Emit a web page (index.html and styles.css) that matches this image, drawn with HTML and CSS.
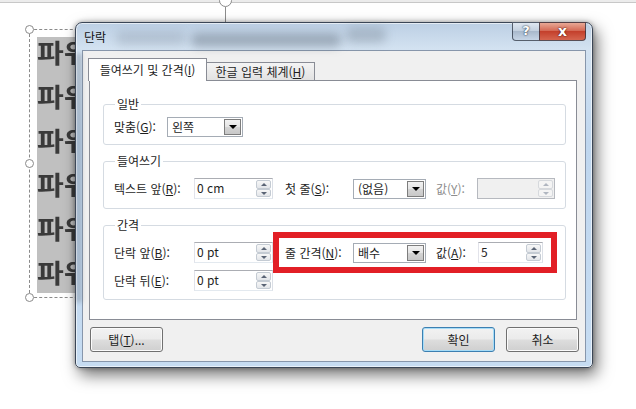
FILE: index.html
```html
<!DOCTYPE html>
<html lang="ko">
<head>
    <meta charset="UTF-8">
    <title>단락</title>
    <link rel="stylesheet" href="styles.css">
</head>
<body>
    <div class="workspace">
        <div class="slide-top"></div>
        <div class="rotate-handle"></div>
        <div class="rotate-stem"></div>

        <div class="textbox">
            <span class="handle h-tl"></span>
            <span class="handle h-ml"></span>
            <span class="handle h-bl"></span>
            <div class="textbox-fill">
                <p>파워</p>
                <p>파워</p>
                <p>파워</p>
                <p>파워</p>
                <p>파워</p>
                <p>파워</p>
            </div>
        </div>

        <div class="dialog">
            <div class="smudge s1"></div>
            <div class="smudge s2"></div>
            <div class="smudge s3"></div>
            <div class="smudge s4"></div>

            <div class="titlebar">
                <span class="title">단락</span>
                <div class="caption-buttons">
                    <span class="cap-help">?</span>
                    <span class="cap-close">x</span>
                </div>
            </div>

            <div class="client">
                <div class="tabs">
                    <span class="tab active">들여쓰기 및 간격(<u>I</u>)</span>
                    <span class="tab">한글 입력 체계(<u>H</u>)</span>
                </div>

                <div class="tab-panel">
                    <fieldset class="group">
                        <legend>일반</legend>
                        <div class="row">
                            <span class="lbl w-53">맞춤(<u>G</u>):</span>
                            <div class="combo w-76">
                                <span class="combo-value">왼쪽</span>
                                <span class="combo-btn"></span>
                            </div>
                        </div>
                    </fieldset>

                    <fieldset class="group">
                        <legend>들여쓰기</legend>
                        <div class="row">
                            <span class="lbl w-80">텍스트 앞(<u>R</u>):</span>
                            <div class="spin w-79">
                                <span class="spin-value">0 cm</span>
                                <span class="spin-btns"><i class="up"></i><i class="down"></i></span>
                            </div>
                            <span class="lbl w-68 ml-12">첫 줄(<u>S</u>):</span>
                            <div class="combo w-73">
                                <span class="combo-value">(없음)</span>
                                <span class="combo-btn"></span>
                            </div>
                            <span class="lbl w-41 ml-10 muted">값(<u>Y</u>):</span>
                            <div class="spin w-78 disabled">
                                <span class="spin-value"></span>
                                <span class="spin-btns"><i class="up"></i><i class="down"></i></span>
                            </div>
                        </div>
                    </fieldset>

                    <fieldset class="group">
                        <legend>간격</legend>
                        <div class="row">
                            <span class="lbl w-80">단락 앞(<u>B</u>):</span>
                            <div class="spin w-79">
                                <span class="spin-value">0 pt</span>
                                <span class="spin-btns"><i class="up"></i><i class="down"></i></span>
                            </div>
                            <span class="lbl w-68 ml-12">줄 간격(<u>N</u>):</span>
                            <div class="combo w-73">
                                <span class="combo-value">배수</span>
                                <span class="combo-btn"></span>
                            </div>
                            <span class="lbl w-42 ml-10">값(<u>A</u>):</span>
                            <div class="spin w-65">
                                <span class="spin-value">5</span>
                                <span class="spin-btns"><i class="up"></i><i class="down"></i></span>
                            </div>
                        </div>
                        <div class="row row-gap">
                            <span class="lbl w-80">단락 뒤(<u>E</u>):</span>
                            <div class="spin w-79">
                                <span class="spin-value">0 pt</span>
                                <span class="spin-btns"><i class="up"></i><i class="down"></i></span>
                            </div>
                        </div>
                    </fieldset>
                </div>

                <div class="button-row">
                    <button class="btn" type="button">탭(<u>T</u>)...</button>
                    <button class="btn btn-default push" type="button">확인</button>
                    <button class="btn" type="button">취소</button>
                </div>
            </div>

            <div class="mark"></div>
        </div>
    </div>
</body>
</html>
```

FILE: styles.css
```css
* {
    box-sizing: border-box;
}
body {
    margin: 0;
    width: 636px;
    height: 409px;
    overflow: hidden;
    background: #fff;
    font-family: "Noto Sans CJK KR", "Noto Sans", sans-serif;
    font-size: 12px;
    color: #1e1e1e;
}
.workspace {
    position: relative;
    width: 636px;
    height: 409px;
}
.slide-top {
    height: 3px;
    background: #ececec;
    border-bottom: 1px solid #c8c8c8;
}
.rotate-handle {
    position: absolute;
    left: 219px;
    top: -6px;
    width: 13px;
    height: 13px;
    border: 1px solid #8c8c8c;
    border-radius: 50%;
    background: #fff;
}
.rotate-stem {
    position: absolute;
    left: 225px;
    top: 7px;
    width: 1px;
    height: 16px;
    background: #8c8c8c;
}

/* slide text box behind the dialog */
.textbox {
    position: absolute;
    left: 29px;
    top: 29px;
    width: 110px;
    height: 269px;
    border: 1px dashed #8a8a8a;
}
.handle {
    position: absolute;
    left: -5px;
    width: 9px;
    height: 9px;
    border: 1px solid #8a8a8a;
    border-radius: 50%;
    background: #fff;
}
.h-tl { top: -5px; }
.h-ml { top: 129px; }
.h-bl { top: 263px; }
.textbox-fill {
    margin: 7px 0 0 7px;
    width: 39px;
    height: 256px;
    overflow: hidden;
    background: #c0c0c0;
    display: flex;
    flex-direction: column;
    gap: 14px;
}
.textbox-fill p {
    margin: 0;
    height: 30px;
    line-height: 30px;
    font-size: 26px;
    font-weight: bold;
    color: #3a3a3a;
    white-space: nowrap;
    transform: scaleX(1.12);
    transform-origin: left center;
}

/* dialog window */
.dialog {
    position: absolute;
    left: 75px;
    top: 22px;
    width: 518px;
    height: 346px;
    border: 1px solid #3b4656;
    border-radius: 7px 7px 5px 5px;
    background: linear-gradient(180deg, #bccfe4 0, #d3e2f1 26px, #bfd6ee 120px, #c6dcf2 100%);
    box-shadow: 4px 7px 16px rgba(0, 0, 0, 0.55), 0 0 5px rgba(0, 0, 0, 0.35), inset 0 0 0 1px rgba(255, 255, 255, 0.6);
    display: flex;
    flex-direction: column;
}
.smudge {
    position: absolute;
    background: rgba(70, 80, 95, 0.35);
    filter: blur(5px);
    border-radius: 6px;
}
.s1 { left: 40px; top: 8px; width: 70px; height: 14px; background: rgba(90, 100, 115, 0.2); }
.s2 { left: 115px; top: 10px; width: 150px; height: 14px; }
.s3 { left: 270px; top: 4px; width: 40px; height: 16px; background: rgba(80, 90, 105, 0.25); }
.s4 { left: 0; top: 30px; width: 6px; height: 250px; background: rgba(90, 95, 105, 0.3); filter: blur(2px); }

.titlebar {
    position: relative;
    height: 27px;
    display: flex;
    align-items: flex-start;
    padding: 0 6px 0 8px;
    flex: none;
}
.title {
    padding-top: 6px;
    line-height: 16px;
    color: #111;
}
.caption-buttons {
    margin-left: auto;
    margin-top: -1px;
    display: flex;
}
.cap-help,
.cap-close {
    height: 19px;
    border: 1px solid rgba(40, 50, 65, 0.75);
    text-align: center;
    color: #fff;
    font-family: "DejaVu Sans", sans-serif;
    font-weight: bold;
    line-height: 16px;
}
.cap-help {
    width: 27px;
    border-right: none;
    border-radius: 0 0 0 4px;
    background: linear-gradient(180deg, #dfe7f1 0, #c3d0df 45%, #a9b9cc 50%, #c6d5e6 100%);
    font-size: 13px;
    text-shadow: 0 0 2px #2d3b4f, 0 0 1px #2d3b4f;
}
.cap-close {
    width: 47px;
    border-radius: 0 0 4px 0;
    background: linear-gradient(180deg, #e8a895 0, #d46a56 45%, #c4402c 50%, #d5654f 100%);
    font-size: 14px;
    text-shadow: 0 0 2px #5b1a10, 0 0 1px #5b1a10;
}

.client {
    flex: 1;
    margin: 0 6px 5px;
    border: 1px solid #8796ab;
    background: #f0f0f0;
    padding: 7px 6px 0;
}
.tabs {
    display: flex;
    align-items: flex-end;
    height: 22px;
    margin-left: -1px;
    position: relative;
    z-index: 1;
}
.tab {
    height: 18px;
    width: 108px;
    border: 1px solid #898c95;
    border-left: none;
    border-bottom: none;
    background: linear-gradient(180deg, #f4f4f4, #e2e2e2);
    line-height: 17px;
    text-align: center;
    white-space: nowrap;
}
.tab.active {
    width: 119px;
    height: 23px;
    margin-bottom: -1px;
    border-left: 1px solid #898c95;
    background: #fff;
    line-height: 22px;
}
.tab-panel {
    width: 488px;
    height: 240px;
    border: 1px solid #898c95;
    background: #fff;
    padding: 15px 10px 0 13px;
}
.group {
    margin: 0 0 8px;
    min-width: 0;
    border: 1px solid #d5dbe2;
    border-radius: 3px;
    padding: 9px 10px 9px;
}
.group:first-child {
    padding: 5px 10px 7px;
}
.group:last-child {
    padding-bottom: 8px;
}
.group legend {
    margin-left: 1px;
    padding: 0 2px;
    line-height: 16px;
}
.row {
    display: flex;
    align-items: center;
    height: 21px;
}
.group:first-child .row {
    height: 20px;
}
.row-gap {
    margin-top: 7px;
}
.lbl {
    flex: none;
    white-space: nowrap;
    line-height: 16px;
}
.muted {
    color: #8d8d8d;
}
.w-41 { width: 41px; }
.w-42 { width: 42px; }
.w-53 { width: 53px; }
.w-65 { width: 65px; }
.w-68 { width: 68px; }
.w-73 { width: 73px; }
.w-76 { width: 76px; }
.w-78 { width: 78px; }
.w-79 { width: 79px; }
.w-80 { width: 80px; }
.ml-10 { margin-left: 10px; }
.ml-12 { margin-left: 12px; }

/* drop-down list */
.combo {
    flex: none;
    display: flex;
    align-items: center;
    height: 20px;
    border: 1px solid #a5acb5;
    background: #fff;
}
.combo-value {
    flex: 1;
    padding-left: 4px;
    line-height: 18px;
    white-space: nowrap;
}
.combo-btn {
    position: relative;
    width: 17px;
    height: 16px;
    margin-right: 1px;
    border: 1px solid #7d7d7d;
    background: linear-gradient(180deg, #f2f2f2 0, #e4e4e4 50%, #d4d4d4 51%, #c8c8c8 100%);
}
.combo-btn::after {
    content: "";
    position: absolute;
    left: 4px;
    top: 5px;
    border-left: 4px solid transparent;
    border-right: 4px solid transparent;
    border-top: 4px solid #000;
}

/* spin box */
.spin {
    flex: none;
    display: flex;
    height: 21px;
    border: 1px solid;
    border-color: #abadb3 #dbdfe6 #e3e9ef #e2e3ea;
    background: #fff;
}
.spin-value {
    flex: 1;
    padding-left: 2px;
    line-height: 18px;
}
.spin-btns {
    width: 15px;
    margin: 1px 1px 1px 0;
    display: flex;
    flex-direction: column;
}
.spin-btns i {
    position: relative;
    flex: 1;
    border: 1px solid #c4cbd3;
    border-radius: 2px;
    background: linear-gradient(180deg, #f7f7f7, #e2e5e9);
}
.spin-btns i::after {
    content: "";
    position: absolute;
    left: 4px;
    top: 2px;
    border-left: 3px solid transparent;
    border-right: 3px solid transparent;
}
.spin-btns .up::after {
    border-bottom: 3px solid #5a6475;
}
.spin-btns .down::after {
    border-top: 3px solid #5a6475;
}
.spin.disabled {
    border-color: #b6b9bf;
    background: #f0f0f0;
}
.spin.disabled .spin-btns i {
    border-color: #d6d9dd;
    background: #f4f4f4;
}
.spin.disabled .up::after {
    border-bottom-color: #b0b6c0;
}
.spin.disabled .down::after {
    border-top-color: #b0b6c0;
}

/* bottom buttons */
.button-row {
    display: flex;
    margin-top: 7px;
    padding-left: 1px;
    gap: 11px;
}
.btn {
    width: 73px;
    height: 25px;
    padding: 0;
    font: inherit;
    color: #1e1e1e;
    border: 1px solid #707070;
    border-radius: 3px;
    background: linear-gradient(180deg, #f2f2f2 0, #ebebeb 48%, #dddddd 52%, #cfcfcf 100%);
    box-shadow: inset 0 0 0 1px #fbfbfb;
}
.btn-default {
    border-color: #3c7fb1;
    box-shadow: inset 0 0 0 1px #a6dcf7;
}
.push {
    margin-left: auto;
}

/* red annotation */
.mark {
    position: absolute;
    left: 197px;
    top: 209px;
    width: 284px;
    height: 41px;
    border: 6px solid #e21f26;
}
```
